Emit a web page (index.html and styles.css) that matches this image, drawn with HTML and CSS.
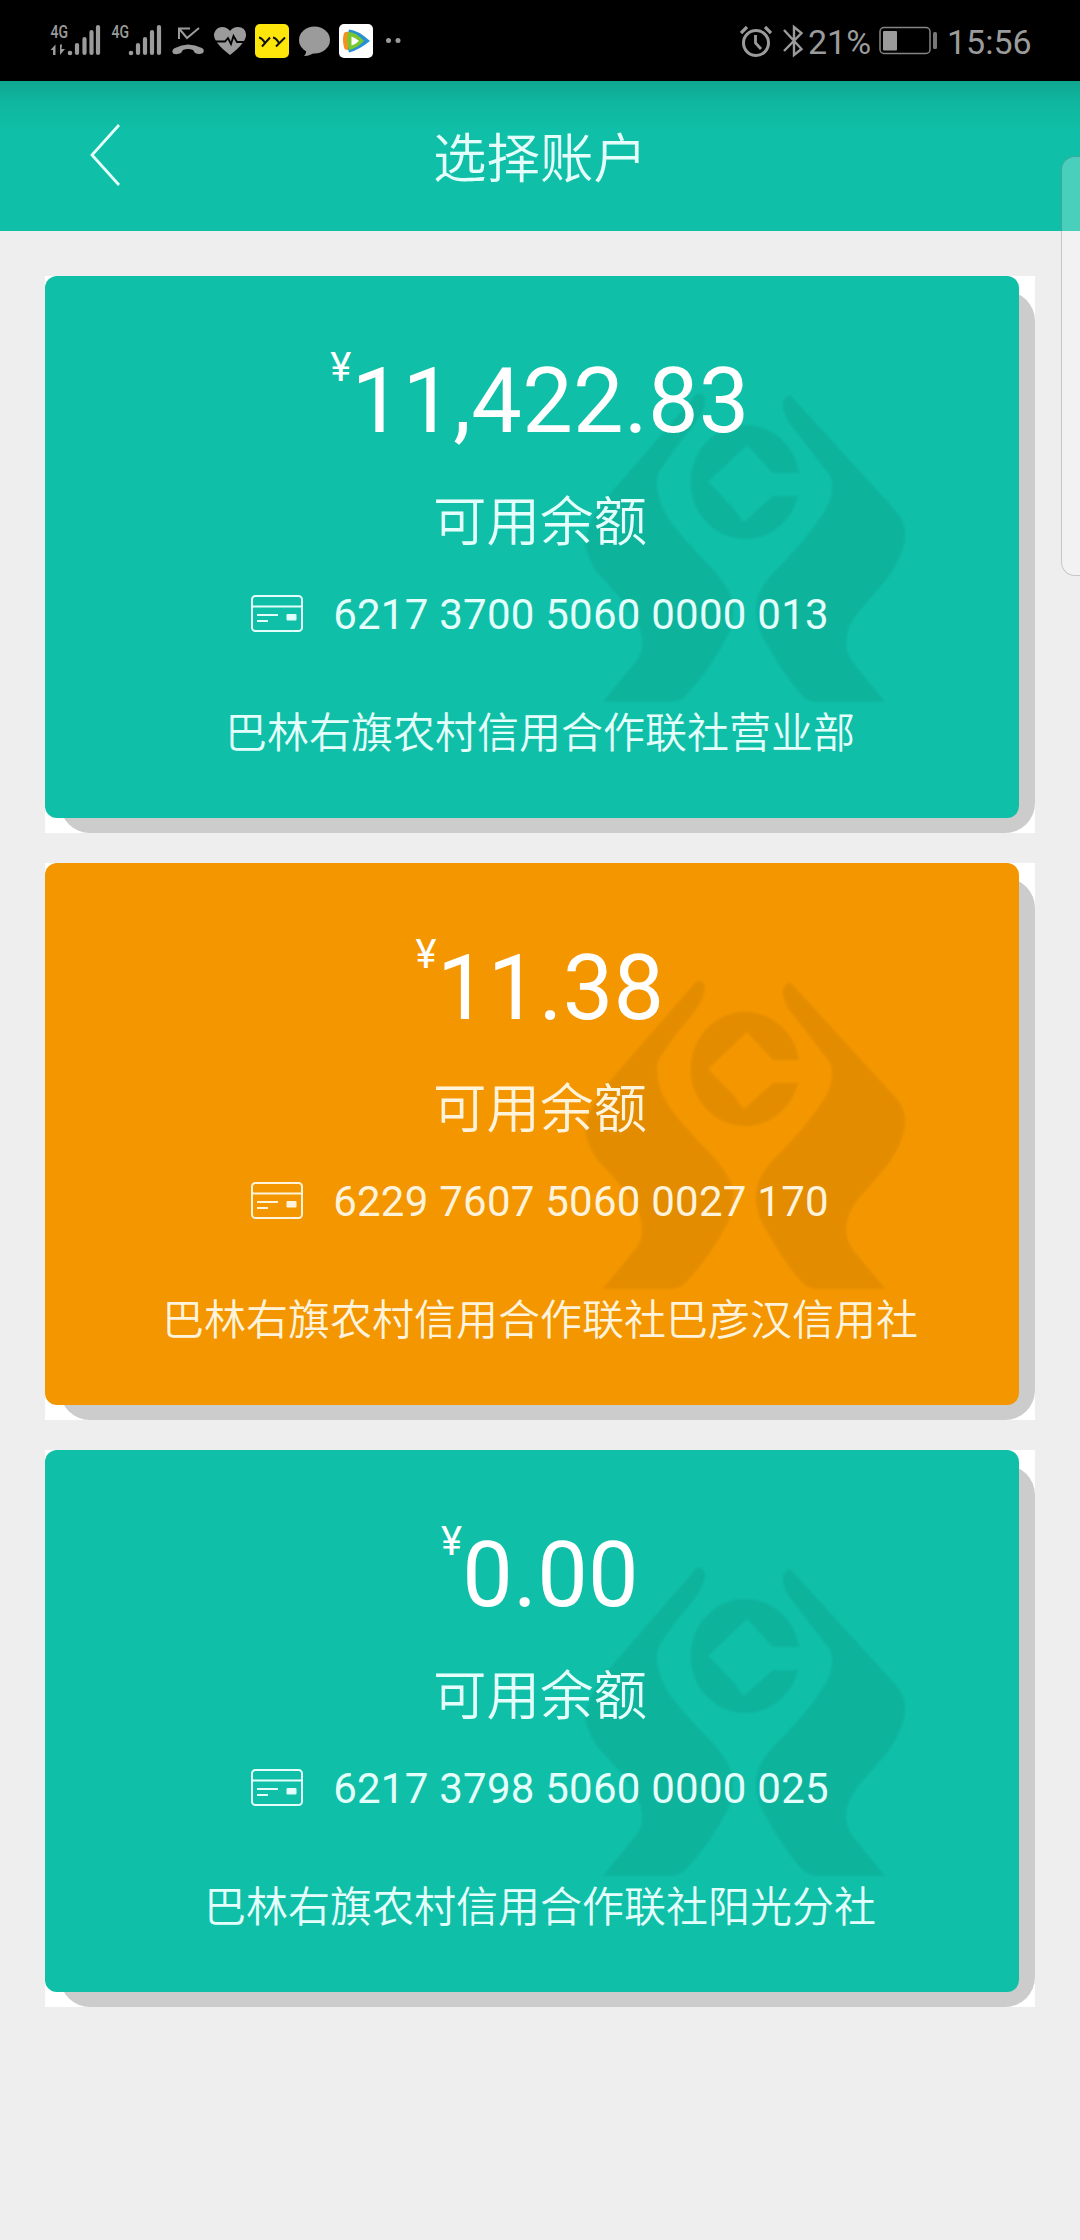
FILE: index.html
```html
<!DOCTYPE html>
<html lang="zh-CN">
<head>
<meta charset="utf-8">
<title>选择账户</title>
<link rel="stylesheet" href="styles.css">
</head>
<body>
<svg width="0" height="0" class="defs">
  <symbol id="mark" viewBox="0 0 380 350">
    <path d="M135 26Q140 20 145 29Q145 36 142 42Q138 50 132 58Q116 76 103 96Q97 102 97 112Q96 130 110 151Q126 172 147 193Q166 212 173 231Q174 248 169 263Q150 300 127 324Q121 332 109 332H43L77 290Q83 282 82 270Q81 252 62 230L36 201Q27 186 25 174Q28 148 50 124Z"/>
    <path d="M230 25Q222 28 223 37Q224 44 228 51L268 103Q273 108 272 120Q271 134 260 148Q246 170 214 202Q194 223 196 243Q197 260 208 276Q224 305 240 323Q247 332 258 332H325L294 294Q286 284 286 272Q286 257 299 241L325 211Q343 188 345 167Q346 152 335 140Z"/>
    <path d="M239 103H213L187 75L148 112Q162 126 175 140Q182 151 184 152L213 126H238A54.500 57 0 1 1 239 103Z"/>
  </symbol>
  <symbol id="bankcard" viewBox="0 0 52 38">
    <g fill="none" stroke="currentColor"><rect x="1" y="1" width="50" height="35" rx="3.500" stroke-width="2"/><path d="M1 11.500H51" stroke-width="2.200"/><path d="M6 20H27M6 26H17" stroke-width="1.900"/></g>
    <rect x="35.500" y="19" width="10" height="6.500" rx="1" fill="currentColor"/>
  </symbol>
</svg>

<div class="status">
  <svg class="status-left" width="380" height="81" viewBox="40 0 380 81">
    <g fill="#9b9b9b">
      <text x="50.500" y="38" class="net" textLength="17.500" lengthAdjust="spacingAndGlyphs">4G</text>
      <path d="M55.500 44.500V55H53V50H50.500ZM62 44.500L61.500 49L65 49L60 55V44.500Z"/>
      <circle cx="70" cy="53" r="2.300"/>
      <path class="bars" d="M77 45V53M84.500 39V53M91.500 32V53M98 27V53"/>
      <text x="111.500" y="38" class="net" textLength="17.500" lengthAdjust="spacingAndGlyphs">4G</text>
      <circle cx="131" cy="53" r="2.300"/>
      <path class="bars" d="M138 45V53M145 39V53M152 32V53M159 27V53"/>
      <path d="M173 53.500Q171 50 175 48Q188 41 202 48Q205 50 203 53Q199 55 195 53L193 50Q188 48 183 50L181 53Q177 55 173 53.500Z"/>
      <path d="M179 39V28.500H190M179 28.500L187 38L199 28" fill="none" stroke="#9b9b9b" stroke-width="2"/>
      <path d="M230 55Q213 42 214 34Q216 27 222 27Q227 27 230 31Q233 27 238 27Q245 27 246 34Q247 42 230 55Z"/>
      <path d="M214 41.500H225L228 38L231 44L233.500 36L237 42H246" fill="none" stroke="#000" stroke-width="1.800"/>
      <ellipse cx="314.500" cy="40" rx="15.500" ry="13.500"/>
      <path d="M306 49Q307 53 304 56Q311 56 318 50Z"/>
      <circle cx="388.500" cy="40.500" r="2.500"/><circle cx="398" cy="40.500" r="2.500"/>
    </g>
    <rect x="255" y="24" width="34" height="34" rx="5" fill="#ffe60a"/>
    <path d="M259 37.500Q262 38 265 43M270 37.500L262 46.500M273 37.500Q276 38 279 43M285 37.500L276 46.500" fill="none" stroke="#111" stroke-width="2"/>
    <rect x="339" y="24" width="34" height="34" rx="5" fill="#fff"/>
    <path d="M349 29.500Q358 30 370 41Q359 50 349 52.500Q345 41 349 29.500Z" fill="#278fd5"/>
    <path d="M344 33Q346 31 350 32L348 50Q344 50 344 47Q342 40 344 33Z" fill="#f5921e"/>
    <path d="M348 32Q356 32 364 41Q356 49 349 50Q346 41 348 32Z" fill="#79c72e"/>
    <path d="M351.500 36.500Q356 38 359 41Q356 44 351.500 45.500Z" fill="#fff"/>
  </svg>
  <div class="status-right">
    <svg class="alarm" width="32" height="32" viewBox="0 0 32 32" fill="none" stroke="#9b9b9b"><circle cx="16" cy="18" r="12.500" stroke-width="3"/><path d="M15.500 10V18L21 24" stroke-width="2.800"/><path d="M1 8L7 2M25 2L31 8" stroke-width="3.200"/></svg>
    <svg class="bt" width="22" height="34" viewBox="0 0 22 34" fill="none" stroke="#9b9b9b" stroke-width="2.400"><path d="M2 6L19.500 25L12 31V3L19.500 9L2 27"/></svg>
    <span class="pct">21%</span>
    <svg class="battery" width="60" height="30" viewBox="0 0 60 30"><rect x="1" y="1.500" width="50" height="26" rx="4" fill="none" stroke="#858585" stroke-width="1.500"/><rect x="4" y="5" width="14" height="19.500" rx="1" fill="#9b9b9b"/><rect x="54" y="6" width="4" height="17" rx="1.500" fill="#777"/></svg>
    <span class="time">15:56</span>
  </div>
</div>

<header class="header">
  <svg class="back" width="32" height="64" viewBox="0 0 32 64"><path d="M29 1L2 31L29 61" fill="none" stroke="#e6fffb" stroke-width="2.800"/></svg>
  <h1 class="title">选择账户</h1>
</header>

<main class="accounts">
  <section class="account">
    <svg class="mark"><use href="#mark"/></svg>
    <div class="amount"><span class="yen">¥</span>11,422.83</div>
    <div class="label">可用余额</div>
    <div class="number"><svg class="cardicon"><use href="#bankcard"/></svg><span>6217 3700 5060 0000 013</span></div>
    <div class="branch">巴林右旗农村信用合作联社营业部</div>
  </section>
  <section class="account orange">
    <svg class="mark"><use href="#mark"/></svg>
    <div class="amount"><span class="yen">¥</span>11.38</div>
    <div class="label">可用余额</div>
    <div class="number"><svg class="cardicon"><use href="#bankcard"/></svg><span>6229 7607 5060 0027 170</span></div>
    <div class="branch">巴林右旗农村信用合作联社巴彦汉信用社</div>
  </section>
  <section class="account">
    <svg class="mark"><use href="#mark"/></svg>
    <div class="amount"><span class="yen">¥</span>0.00</div>
    <div class="label">可用余额</div>
    <div class="number"><svg class="cardicon"><use href="#bankcard"/></svg><span>6217 3798 5060 0000 025</span></div>
    <div class="branch">巴林右旗农村信用合作联社阳光分社</div>
  </section>
</main>
<div class="edge-panel"></div>
</body>
</html>
```
FILE: styles.css
```css
* { box-sizing: border-box; }
body {
  position: relative;
  margin: 0;
  width: 1080px;
  height: 2240px;
  overflow: hidden;
  background: #eee;
  color: #e4fffb;
  font-family: Roboto, "Noto Sans CJK SC", sans-serif;
}
.defs { position: absolute; }
.status {
  display: flex;
  justify-content: space-between;
  height: 81px;
  padding: 0 48px 0 40px;
  background: #000;
  color: #9b9b9b;
}
.net { font: 500 19px "Roboto", sans-serif; }
.bars { fill: none; stroke: #9b9b9b; stroke-width: 4.200; stroke-linecap: round; }
.status-right { display: flex; align-items: center; height: 81px; font-size: 34px; }
.status-right span { padding-top: 2px; }
.alarm { margin-right: 10px; }
.bt { margin-right: 4px; }
.pct { width: 71px; }
.battery { margin-right: 8px; }
.time { width: 85px; white-space: nowrap; }

.header {
  display: flex;
  align-items: center;
  height: 150px;
  padding: 0 90px;
  background: linear-gradient(#0fa690 0, #0fb69f 20px, #0fbfa7 50px);
}
.back { flex: none; margin-right: -32px; }
.title {
  flex: 1;
  margin: 0;
  padding-top: 8px;
  text-align: center;
  font-size: 53.5px;
  font-weight: 350;
  line-height: 142px;
}

.accounts { display: flex; flex-direction: column; gap: 30px; padding: 45px; }
.account {
  --fill: #0fbfa7;
  position: relative;
  isolation: isolate;
  display: flex;
  flex-direction: column;
  align-items: center;
  height: 557px;
  padding-top: 73px;
  background: #fff;
}
.orange { --fill: #f39600; color: #fff3dc; }
.account::before, .account::after { content: ""; position: absolute; z-index: -2; }
.account::before { inset: 15px 0 0 15px; border-radius: 30px; background: #ccc; }
.account::after { inset: 0 16px 15px 0; border-radius: 12px; background: var(--fill); }
.mark { position: absolute; z-index: -1; left: 515px; top: 94px; width: 380px; height: 350px; fill: #000; opacity: .06; filter: blur(1px); }
.amount { display: flex; align-items: flex-start; color: #fff; font-size: 90px; line-height: 106px; letter-spacing: .3px; }
.yen { margin-top: -1px; font-size: 40px; line-height: 40px; }
.label { margin-top: 28px; font-size: 53.5px; font-weight: 350; line-height: 80px; }
.number { display: flex; align-items: center; gap: 30px; margin-top: 24px; font-size: 42px; line-height: 50px; letter-spacing: .24px; white-space: nowrap; }
.number span { padding-top: 3px; }
.cardicon { width: 52px; height: 38px; }
.branch { margin-top: 63px; font-size: 42px; font-weight: 350; line-height: 62px; }

.edge-panel {
  position: absolute;
  left: 1061px;
  top: 156px;
  width: 40px;
  height: 420px;
  border: 1px solid rgba(0, 0, 0, .18);
  border-radius: 14px;
  background: rgba(255, 255, 255, .25);
}
```
